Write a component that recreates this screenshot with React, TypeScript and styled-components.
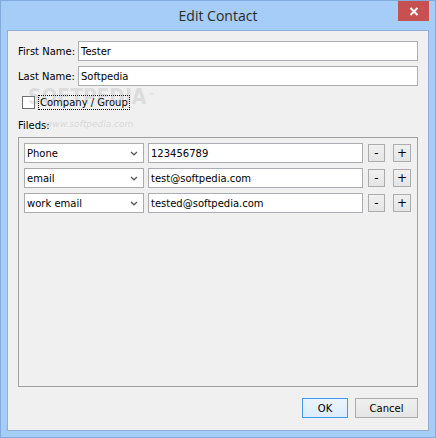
import React from "react";
import styled, { createGlobalStyle } from "styled-components";

const Global = createGlobalStyle`
  html, body { margin: 0; padding: 0; background: #a5cdf8; }
  body { width: 436px; height: 438px; overflow: hidden; font-family: "DejaVu Sans", "Liberation Sans", sans-serif; }
  * { box-sizing: border-box; }
`;

const Window = styled.div`
  width: 436px;
  height: 438px;
  background: #a5cdf8;
  border: 1px solid #80abdc;
  display: flex;
  flex-direction: column;
  padding: 0 6px 6px 6px;
`;

const TitleBar = styled.div`
  height: 29px;
  display: grid;
  grid-template-columns: 1fr auto 1fr;
  align-items: center;
`;

const Title = styled.div`
  font-family: "Open Sans", "Noto Sans", sans-serif;
  font-size: 14px;
  color: #2b2b2b;
  line-height: 20px;
  padding-top: 1px;
`;

const CloseButton = styled.div`
  justify-self: end;
  align-self: start;
  width: 31px;
  height: 20px;
  background: #c75050;
  display: flex;
  align-items: center;
  justify-content: center;
`;

const Client = styled.div`
  position: relative;
  flex: 1;
  background: #f0f0f0;
  border: 1px solid #8eafd6;
  padding: 10px 10px 12px 10px;
  display: flex;
  flex-direction: column;
  font-size: 10px;
  color: #000;
`;

const FormRow = styled.div<{ $top?: number }>`
  display: grid;
  grid-template-columns: 60px 1fr;
  align-items: center;
  height: 20px;
  margin-top: ${(p) => p.$top ?? 0}px;
`;

const Label = styled.label`
  white-space: nowrap;
`;

const TextBox = styled.div`
  height: 20px;
  background: #fff;
  border: 1px solid #abadb3;
  padding: 0 2px;
  display: flex;
  align-items: center;
  white-space: nowrap;
  overflow: hidden;
`;

const CheckRow = styled.div`
  display: flex;
  align-items: center;
  height: 15px;
  margin-top: 9px;
  padding-left: 4px;
  gap: 3px;
`;

const CheckBox = styled.div`
  width: 13px;
  height: 13px;
  background: #fff;
  border: 1px solid #707070;
`;

const CheckLabel = styled.span`
  height: 15px;
  line-height: 13px;
  padding: 0 1px;
  border: 1px dotted #000;
`;

const SectionLabel = styled.div`
  margin-top: 9px;
  line-height: 13px;
  height: 13px;
`;

const Group = styled.div`
  flex: 1;
  margin-top: 5px;
  border: 1px solid #a0a0a0;
  padding: 5px;
  display: flex;
  flex-direction: column;
  gap: 5px;
`;

const FieldLine = styled.div`
  display: flex;
  align-items: center;
  height: 20px;
`;

const Combo = styled.div`
  width: 120px;
  height: 20px;
  background: #fff;
  border: 1px solid #acacac;
  padding: 0 5px 0 2px;
  display: flex;
  align-items: center;
  justify-content: space-between;
  margin-right: 4px;
  white-space: nowrap;
`;

const FieldInput = styled(TextBox)`
  width: 215px;
  margin-right: 5px;
`;

const SmallButton = styled.div<{ $w: number; $gap?: number }>`
  width: ${(p) => p.$w}px;
  height: 18px;
  background: linear-gradient(#f0f0f0, #e5e5e5);
  border: 1px solid #acacac;
  display: flex;
  align-items: center;
  justify-content: center;
  font-size: 12px;
  line-height: 1;
  margin-left: ${(p) => p.$gap ?? 0}px;
`;

const ButtonRow = styled.div`
  margin-top: 11px;
  display: flex;
  justify-content: flex-end;
  gap: 7px;
`;

const DialogButton = styled.div<{ $primary?: boolean; $w: number }>`
  width: ${(p) => p.$w}px;
  height: 20px;
  border: 1px solid ${(p) => (p.$primary ? "#3c9bef" : "#acacac")};
  background: ${(p) =>
    p.$primary ? "linear-gradient(#ecf4fc, #dcecfc)" : "linear-gradient(#f0f0f0, #e5e5e5)"};
  display: flex;
  align-items: center;
  justify-content: center;
`;

const Watermark = styled.div`
  position: absolute;
  left: 20px;
  top: 54px;
  pointer-events: none;
  color: rgba(150, 150, 150, 0.24);
  font-family: "DejaVu Sans", sans-serif;
  font-weight: bold;
  font-size: 22px;
  line-height: 24px;
  white-space: nowrap;
  transform: scaleX(0.85);
  transform-origin: left top;
`;

const WatermarkTm = styled.sup`
  font-size: 8px;
  vertical-align: top;
  font-weight: normal;
  margin-left: 2px;
`;

const WatermarkUrl = styled.div`
  position: absolute;
  left: 37px;
  top: 88px;
  pointer-events: none;
  color: rgba(150, 150, 150, 0.3);
  font-family: "DejaVu Sans", sans-serif;
  font-size: 9px;
  font-style: italic;
`;

const Chevron = () => (
  <svg width="8" height="5" viewBox="0 0 8 5">
    <path d="M1 1 L4 3.8 L7 1" fill="none" stroke="#5a5a5a" strokeWidth="1.3" />
  </svg>
);

const CloseX = () => (
  <svg width="10" height="9" viewBox="0 0 10 9">
    <path d="M1.5 1 L8.5 8 M8.5 1 L1.5 8" stroke="#fff" strokeWidth="2" />
  </svg>
);

const fields = [
  { type: "Phone", value: "123456789" },
  { type: "email", value: "test@softpedia.com" },
  { type: "work email", value: "tested@softpedia.com" },
];

export default function App() {
  return (
    <>
      <Global />
      <Window>
        <TitleBar>
          <div />
          <Title>Edit Contact</Title>
          <CloseButton>
            <CloseX />
          </CloseButton>
        </TitleBar>
        <Client>
          <FormRow>
            <Label>First Name:</Label>
            <TextBox>Tester</TextBox>
          </FormRow>
          <FormRow $top={5}>
            <Label>Last Name:</Label>
            <TextBox>Softpedia</TextBox>
          </FormRow>
          <CheckRow>
            <CheckBox />
            <CheckLabel>Company / Group</CheckLabel>
          </CheckRow>
          <SectionLabel>Fileds:</SectionLabel>
          <Group>
            {fields.map((f) => (
              <FieldLine key={f.type}>
                <Combo>
                  <span>{f.type}</span>
                  <Chevron />
                </Combo>
                <FieldInput>{f.value}</FieldInput>
                <SmallButton $w={17}>-</SmallButton>
                <SmallButton $w={18} $gap={8}>+</SmallButton>
              </FieldLine>
            ))}
          </Group>
          <ButtonRow>
            <DialogButton $primary $w={46}>OK</DialogButton>
            <DialogButton $w={63}>Cancel</DialogButton>
          </ButtonRow>
          <Watermark>
            SOFTPEDIA<WatermarkTm>™</WatermarkTm>
          </Watermark>
          <WatermarkUrl>www.softpedia.com</WatermarkUrl>
        </Client>
      </Window>
    </>
  );
}
